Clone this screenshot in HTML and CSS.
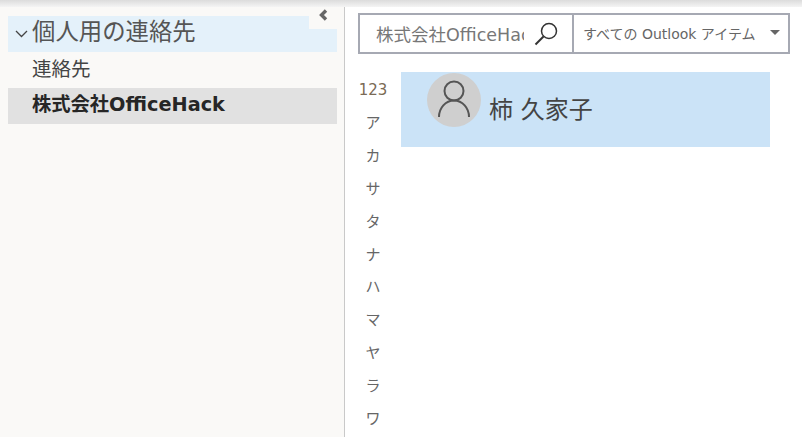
FILE: index.html
```html
<!DOCTYPE html>
<html lang="ja">
<head>
  <meta charset="UTF-8" />
  <title>連絡先</title>
  <link rel="stylesheet" href="styles.css">
</head>
<body>
  <div class="topbar"></div>
  <div class="app">
    <!-- Folder pane -->
    <div class="sidebar">
      <div class="collapse">
        <svg width="10" height="12" viewBox="0 0 10 12"><path d="M8 1.500 3.500 6 8 10.500" fill="none" stroke="#666" stroke-width="3.400"/></svg>
      </div>
      <div class="folder-head">
        <svg class="chevron" width="13" height="8" viewBox="0 0 13 8"><path d="M1 1l5.500 5.500L12 1" fill="none" stroke="#444" stroke-width="1.300"/></svg>
        <span>個人用の連絡先</span>
      </div>
      <div class="folder">連絡先</div>
      <div class="folder selected">株式会社OfficeHack</div>
    </div>

    <!-- Contacts -->
    <div class="main">
      <div class="searchbar">
        <div class="search-input">
          <span class="search-text">株式会社OfficeHack</span>
          <svg class="search-icon" width="24" height="24" viewBox="0 0 24 24"><circle cx="15" cy="9" r="7.500" fill="none" stroke="#333" stroke-width="1.500"/><path d="M9.500 14.500 1.500 22.500" fill="none" stroke="#333" stroke-width="2"/></svg>
        </div>
        <div class="search-scope">
          <span>すべての Outlook アイテム</span>
          <div class="caret"></div>
        </div>
      </div>
      <div class="content">
        <div class="index">
          <div class="num">123</div>
          <div>ア</div>
          <div>カ</div>
          <div>サ</div>
          <div>タ</div>
          <div>ナ</div>
          <div>ハ</div>
          <div>マ</div>
          <div>ヤ</div>
          <div>ラ</div>
          <div>ワ</div>
        </div>
        <div class="card">
          <div class="avatar">
            <svg width="32" height="38" viewBox="0 0 32 38"><circle cx="16" cy="11" r="9.500" fill="none" stroke="#555" stroke-width="2"/><path d="M1 37c0-9 6.500-16.500 15-16.500S31 28 31 37" fill="none" stroke="#555" stroke-width="2"/></svg>
          </div>
          <div class="name">柿 久家子</div>
        </div>
      </div>
    </div>
  </div>
</body>
</html>
```

FILE: styles.css
```css
* {
  box-sizing: border-box;
}
body {
  margin: 0;
  width: 802px;
  height: 437px;
  overflow: hidden;
  background: #fff;
  font-family: "DejaVu Sans", "Noto Sans CJK JP", sans-serif;
  color: #444;
}
.topbar {
  height: 7px;
  background: linear-gradient(#dcdcdc, #f4f4f4);
}
.app {
  display: flex;
  height: 430px;
}
.sidebar {
  position: relative;
  width: 345px;
  padding: 9px 7px 0 8px;
  background: #faf9f7;
  border-right: 1px solid #c9c9c9;
}
.collapse {
  position: absolute;
  top: 2px;
  right: 7px;
  width: 28px;
  height: 20px;
  padding-left: 9px;
  background: #faf9f7;
  line-height: 0;
}
.folder-head {
  display: flex;
  align-items: center;
  height: 36px;
  padding-left: 7px;
  background: #e4f1fa;
  font-size: 23.400px;
  line-height: 30px;
  color: #555;
}
.chevron {
  margin-right: 4px;
}
.folder-head span {
  margin-top: -5px;
}
.folder {
  height: 36px;
  padding-left: 24px;
  font-size: 19.500px;
  line-height: 36px;
  color: #444;
}
.folder.selected {
  background: #e1e1e1;
  font-weight: 700;
  font-size: 19.300px;
  line-height: 34px;
  color: #262626;
}
.main {
  flex: 1;
  padding: 6px 12px 0 13px;
}
.searchbar {
  display: flex;
  height: 41px;
  border: 2px solid #a6a9b3;
}
.search-input {
  display: flex;
  align-items: center;
  width: 214px;
  padding-left: 16px;
  border-right: 2px solid #a6a9b3;
}
.search-text {
  width: 148px;
  overflow: hidden;
  white-space: nowrap;
  font-size: 17.500px;
  color: #777;
}
.search-icon {
  margin-left: 10px;
}
.search-scope {
  display: flex;
  flex: 1;
  align-items: center;
  justify-content: space-between;
  padding: 0 8px 2px 9px;
  font-size: 14px;
  color: #666;
}
.caret {
  width: 0;
  height: 0;
  border-left: 5px solid transparent;
  border-right: 5px solid transparent;
  border-top: 5px solid #666;
}
.content {
  display: flex;
  margin-top: 18px;
}
.index {
  width: 43px;
  margin-top: 2px;
  padding-right: 13px;
  font-size: 15px;
  line-height: 32.900px;
  text-align: center;
  color: #666;
}
.index .num {
  color: #7a6a55;
}
.card {
  display: flex;
  width: 369px;
  height: 75px;
  padding-left: 26px;
  background: #cbe3f7;
}
.avatar {
  display: flex;
  flex: none;
  align-items: flex-end;
  justify-content: center;
  width: 54px;
  height: 54px;
  margin-top: 1px;
  padding-bottom: 9px;
  border-radius: 50%;
  background: #cfcfcf;
}
.name {
  margin: 20px 0 0 8px;
  font-size: 24px;
  line-height: 36px;
  color: #444;
}
```
